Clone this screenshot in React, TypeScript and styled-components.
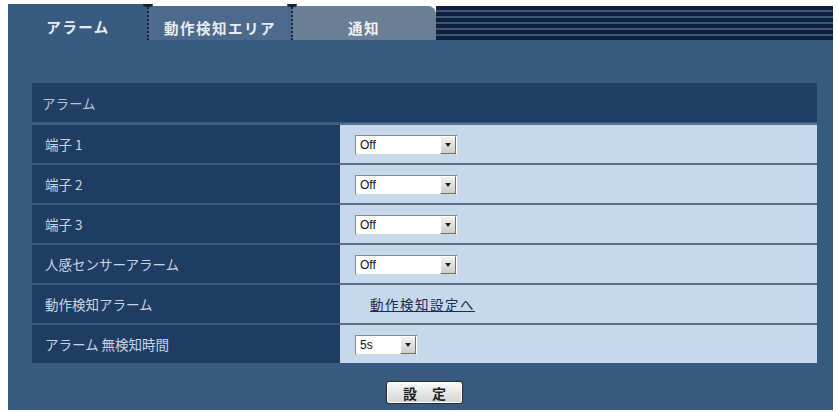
import React from "react";
import styled, { createGlobalStyle } from "styled-components";

const GlobalStyle = createGlobalStyle`
  html, body {
    margin: 0;
    padding: 0;
    background: #ffffff;
  }
  body {
    font-family: "Noto Sans CJK JP", "Liberation Sans", sans-serif;
  }
`;

type Row = {
  label: string;
  kind: "select" | "link";
  value?: string;
  width?: number;
};

const rows: Row[] = [
  { label: "端子 1", kind: "select", value: "Off", width: 103 },
  { label: "端子 2", kind: "select", value: "Off", width: 103 },
  { label: "端子 3", kind: "select", value: "Off", width: 103 },
  { label: "人感センサーアラーム", kind: "select", value: "Off", width: 103 },
  { label: "動作検知アラーム", kind: "link", value: "動作検知設定へ" },
  { label: "アラーム 無検知時間", kind: "select", value: "5s", width: 63 },
];

const App = () => (
  <Page>
    <GlobalStyle />
    <Panel>
      <TabBar>
        <Tab $variant="active">アラーム</Tab>
        <Tab $variant="idle" $divider>
          動作検知エリア
        </Tab>
        <Tab $variant="muted" $divider>
          通知
        </Tab>
        <Stripes />
      </TabBar>

      <Content>
        <Table>
          <SectionHeader>アラーム</SectionHeader>
          {rows.map((row) => (
            <React.Fragment key={row.label}>
              <LabelCell>{row.label}</LabelCell>
              <ValueCell>
                {row.kind === "select" ? (
                  <Select style={{ width: row.width }}>
                    <SelectText>{row.value}</SelectText>
                    <ArrowButton>
                      <svg width="6" height="4" viewBox="0 0 6 4">
                        <path d="M0 0h6L3 4z" fill="#222" />
                      </svg>
                    </ArrowButton>
                  </Select>
                ) : (
                  <SettingsLink href="#">{row.value}</SettingsLink>
                )}
              </ValueCell>
            </React.Fragment>
          ))}
        </Table>

        <ButtonRow>
          <SubmitButton>設 定</SubmitButton>
        </ButtonRow>
      </Content>
    </Panel>
  </Page>
);

export default App;

const Page = styled.div`
  padding: 4px 4px 2px 8px;
`;

const Panel = styled.div`
  height: 406px;
  background: #395a7f;
  display: flex;
  flex-direction: column;
`;

const TabBar = styled.div`
  display: flex;
  height: 36px;
  background: #ffffff;
`;

const tabColors = {
  active: { bg: "#3a5b80", fg: "#e4ecf4" },
  idle: { bg: "#4d6a8c", fg: "#e8eef4" },
  muted: { bg: "#6a7e96", fg: "#eef2f6" },
};

const Tab = styled.div<{ $variant: keyof typeof tabColors; $divider?: boolean }>`
  position: relative;
  width: ${(p) => (p.$variant === "active" ? 140 : 144)}px;
  box-sizing: border-box;
  display: flex;
  align-items: center;
  justify-content: center;
  padding-top: 8px;
  background: ${(p) => tabColors[p.$variant].bg};
  color: ${(p) => tabColors[p.$variant].fg};
  font-size: 14.5px;
  font-weight: 700;
  letter-spacing: 1.5px;
  margin-top: ${(p) => (p.$variant === "active" ? 0 : 2)}px;
  border-top-right-radius: ${(p) => (p.$variant === "muted" ? 8 : 0)}px;

  &::before {
    content: "";
    display: ${(p) => (p.$divider ? "block" : "none")};
    position: absolute;
    left: -1px;
    top: -2px;
    bottom: 0;
    border-left: 2px dotted #14243c;
  }

  &::after {
    content: "";
    display: ${(p) => (p.$divider ? "block" : "none")};
    position: absolute;
    left: -5px;
    top: -2px;
    width: 10px;
    height: 3px;
    border-radius: 0 0 4px 4px;
    background: #14243c;
  }
`;

const Stripes = styled.div`
  flex: 1;
  margin-top: 2px;
  background: repeating-linear-gradient(
    to bottom,
    #0e1f3b 0px,
    #0e1f3b 4px,
    #3d5576 4px,
    #3d5576 6px
  );
`;

const Content = styled.div`
  padding: 43px 16px 0 24px;
`;

const Table = styled.div`
  display: grid;
  grid-template-columns: 308px 1fr;
  grid-auto-rows: 40px;
`;

const SectionHeader = styled.div`
  grid-column: 1 / -1;
  height: 39px;
  background: #213f64;
  color: #b4c4d8;
  font-size: 13.5px;
  display: flex;
  align-items: center;
  padding-left: 10px;
`;

const LabelCell = styled.div`
  background: #1f3d62;
  border-top: 2px solid #3f5b7e;
  color: #c9d5e4;
  font-size: 13.5px;
  display: flex;
  align-items: center;
  padding-left: 13px;
`;

const ValueCell = styled.div`
  background: #c6d8ec;
  border-top: 2px solid #5b6f8a;
  display: flex;
  align-items: center;
  padding-left: 15px;
`;

const Select = styled.div`
  height: 20px;
  box-sizing: border-box;
  display: flex;
  align-items: center;
  background: #ffffff;
  border-top: 1px solid #8a8a8a;
  border-left: 1px solid #8a8a8a;
  border-right: 1px solid #d8d8d8;
  border-bottom: 1px solid #d8d8d8;
  margin-top: 1px;
`;

const SelectText = styled.span`
  flex: 1;
  padding-left: 4px;
  font-family: "Liberation Sans", Arial, sans-serif;
  font-size: 12px;
  color: #111;
`;

const ArrowButton = styled.span`
  width: 14px;
  height: 16px;
  margin-right: 1px;
  display: flex;
  align-items: center;
  justify-content: center;
  background: linear-gradient(#f2f2f2, #cfcfcf);
  border-right: 1px solid #707070;
  border-bottom: 1px solid #707070;
  border-top: 1px solid #ffffff;
  border-left: 1px solid #ffffff;
`;

const SettingsLink = styled.a`
  margin-left: 15px;
  color: #1b2a50;
  font-size: 13.5px;
  letter-spacing: 1.5px;
  text-decoration: underline;
`;

const ButtonRow = styled.div`
  display: flex;
  justify-content: center;
  padding-top: 18px;
`;

const SubmitButton = styled.button`
  width: 77px;
  height: 23px;
  border: 1px solid #2a2a2a;
  border-radius: 3px;
  background: linear-gradient(#fafafa, #d4d4d4);
  box-shadow: inset 0 0 0 1px #ffffff;
  font-family: "Noto Sans CJK JP", sans-serif;
  font-size: 14px;
  font-weight: 700;
  color: #222;
  letter-spacing: 6px;
  padding: 0 0 0 6px;
`;
